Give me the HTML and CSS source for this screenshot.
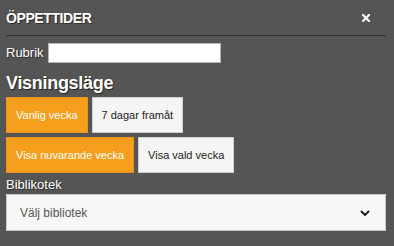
FILE: index.html
```html
<!DOCTYPE html>
<html lang="sv">
<head>
<meta charset="utf-8">
<title>Öppettider</title>
<link rel="stylesheet" href="styles.css">
</head>
<body>
<div class="panel">
  <div class="header">
    <span class="title">ÖPPETTIDER</span>
    <span class="close" aria-label="Stäng">
      <svg width="8" height="8" viewBox="0 0 8 8"><path d="M1 1L7 7M7 1L1 7" stroke="#fff" stroke-width="2.2" stroke-linecap="square"/></svg>
    </span>
  </div>
  <div class="field-row">
    <label class="label">Rubrik</label>
    <input class="text-input" type="text">
  </div>
  <h2 class="section">Visningsläge</h2>
  <div class="btn-row">
    <button class="btn active">Vanlig vecka</button>
    <button class="btn">7 dagar framåt</button>
  </div>
  <div class="btn-row">
    <button class="btn active">Visa nuvarande vecka</button>
    <button class="btn">Visa vald vecka</button>
  </div>
  <div class="label block">Biblikotek</div>
  <div class="select">
    <span class="select-text">Välj bibliotek</span>
    <svg class="chev" width="10" height="6" viewBox="0 0 10 6"><path d="M1 1L5 5L9 1" fill="none" stroke="#222" stroke-width="2"/></svg>
  </div>
</div>
</body>
</html>
```

FILE: styles.css
```css
html, body {
  margin: 0;
  padding: 0;
  background: #555555;
  width: 394px;
  height: 246px;
  overflow: hidden;
}
.panel {
  padding: 0 8px 0 6px;
  font-family: "Liberation Sans", Arial, sans-serif;
  color: #fff;
}
.header {
  display: flex;
  align-items: flex-start;
  height: 35px;
  border-bottom: 1px solid #333;
  box-sizing: content-box;
}
.title {
  font-size: 14px;
  font-weight: bold;
  line-height: 16px;
  padding-top: 10px;
  letter-spacing: -0.4px;
  text-shadow: 1px 1px 1px #2a2a2a;
}
.close {
  margin-left: auto;
  margin-right: 16px;
  margin-top: 14px;
  width: 8px;
  height: 8px;
  display: flex;
}
.field-row {
  display: flex;
  align-items: center;
  padding-top: 7px;
  gap: 4px;
}
.label {
  font-size: 13px;
  line-height: 16px;
  color: #fff;
  text-shadow: 1px 1px 1px #2a2a2a;
}
.text-input {
  width: 173px;
  height: 20px;
  box-sizing: border-box;
  border: 1px solid #b5b5b5;
  background: #fff;
  margin: 0;
  padding: 0 4px;
}
.section {
  font-size: 18px;
  font-weight: bold;
  line-height: 20px;
  margin: 10px 0 4px;
  letter-spacing: -0.3px;
  text-shadow: 1px 1px 1px #222;
}
.btn-row {
  display: flex;
  gap: 4px;
  margin-bottom: 4px;
}
.btn {
  height: 36px;
  padding: 0 9px;
  border: 1px solid #d0d0d0;
  background: #f5f5f5;
  color: #222;
  font-family: "Liberation Sans", Arial, sans-serif;
  font-size: 11px;
  margin: 0;
}
.btn.active {
  background: #f69f1d;
  border-color: #e8921a;
  color: #fff;
}
.label.block {
  margin-top: 4px;
}
.select {
  margin-top: 1px;
  height: 37px;
  box-sizing: border-box;
  border: 1px solid #c8c8c8;
  background: #f7f7f7;
  display: flex;
  align-items: center;
  padding: 0 15px 0 13px;
}
.select-text {
  font-size: 12px;
  color: #555;
}
.chev {
  margin-left: auto;
}
```
